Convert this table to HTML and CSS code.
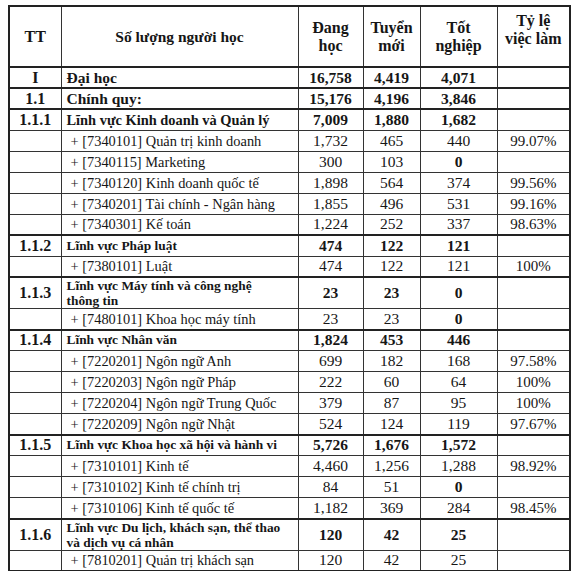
FILE: index.html
```html
<!DOCTYPE html>
<html lang="vi">
<head>
<meta charset="utf-8">
<link rel="stylesheet" href="styles.css">
</head>
<body>
<table class="stats">
  <colgroup>
    <col class="c-tt"><col class="c-name"><col class="c-n1"><col class="c-n2"><col class="c-n3"><col class="c-rate">
  </colgroup>
  <thead>
    <tr class="head">
      <th>TT</th>
      <th class="title">Số lượng người học</th>
      <th>Đang<br>học</th>
      <th>Tuyển<br>mới</th>
      <th>Tốt<br>nghiệp</th>
      <th class="top">Tỷ lệ<br>việc làm</th>
    </tr>
  </thead>
  <tbody>
    <tr class="b"><td class="tt">I</td><td class="name big">Đại học</td><td>16,758</td><td>4,419</td><td>4,071</td><td></td></tr>
    <tr class="b"><td class="tt">1.1</td><td class="name big">Chính quy:</td><td>15,176</td><td>4,196</td><td>3,846</td><td></td></tr>
    <tr class="b"><td class="tt">1.1.1</td><td class="name mid">Lĩnh vực Kinh doanh và Quản lý</td><td>7,009</td><td>1,880</td><td>1,682</td><td></td></tr>
    <tr><td></td><td class="name sub">+ [7340101] Quản trị kinh doanh</td><td>1,732</td><td>465</td><td>440</td><td class="rate">99.07%</td></tr>
    <tr><td></td><td class="name sub">+ [7340115] Marketing</td><td>300</td><td>103</td><td class="bold">0</td><td></td></tr>
    <tr><td></td><td class="name sub">+ [7340120] Kinh doanh quốc tế</td><td>1,898</td><td>564</td><td>374</td><td class="rate">99.56%</td></tr>
    <tr><td></td><td class="name sub">+ [7340201] Tài chính - Ngân hàng</td><td>1,855</td><td>496</td><td>531</td><td class="rate">99.16%</td></tr>
    <tr><td></td><td class="name sub">+ [7340301] Kế toán</td><td>1,224</td><td>252</td><td>337</td><td class="rate">98.63%</td></tr>
    <tr class="b"><td class="tt">1.1.2</td><td class="name">Lĩnh vực Pháp luật</td><td>474</td><td>122</td><td>121</td><td></td></tr>
    <tr><td></td><td class="name sub">+ [7380101] Luật</td><td>474</td><td>122</td><td>121</td><td class="rate">100%</td></tr>
    <tr class="b two"><td class="tt">1.1.3</td><td class="name">Lĩnh vực Máy tính và công nghệ<br>thông tin</td><td>23</td><td>23</td><td>0</td><td></td></tr>
    <tr><td></td><td class="name sub">+ [7480101] Khoa học máy tính</td><td>23</td><td>23</td><td class="bold">0</td><td></td></tr>
    <tr class="b"><td class="tt">1.1.4</td><td class="name">Lĩnh vực Nhân văn</td><td>1,824</td><td>453</td><td>446</td><td></td></tr>
    <tr><td></td><td class="name sub">+ [7220201] Ngôn ngữ Anh</td><td>699</td><td>182</td><td>168</td><td class="rate">97.58%</td></tr>
    <tr><td></td><td class="name sub">+ [7220203] Ngôn ngữ Pháp</td><td>222</td><td>60</td><td>64</td><td class="rate">100%</td></tr>
    <tr><td></td><td class="name sub">+ [7220204] Ngôn ngữ Trung Quốc</td><td>379</td><td>87</td><td>95</td><td class="rate">100%</td></tr>
    <tr><td></td><td class="name sub">+ [7220209] Ngôn ngữ Nhật</td><td>524</td><td>124</td><td>119</td><td class="rate">97.67%</td></tr>
    <tr class="b"><td class="tt">1.1.5</td><td class="name">Lĩnh vực Khoa học xã hội và hành vi</td><td>5,726</td><td>1,676</td><td>1,572</td><td></td></tr>
    <tr><td></td><td class="name sub">+ [7310101] Kinh tế</td><td>4,460</td><td>1,256</td><td>1,288</td><td class="rate">98.92%</td></tr>
    <tr><td></td><td class="name sub">+ [7310102] Kinh tế chính trị</td><td>84</td><td>51</td><td class="bold">0</td><td></td></tr>
    <tr><td></td><td class="name sub">+ [7310106] Kinh tế quốc tế</td><td>1,182</td><td>369</td><td>284</td><td class="rate">98.45%</td></tr>
    <tr class="b two"><td class="tt">1.1.6</td><td class="name">Lĩnh vực Du lịch, khách sạn, thể thao<br>và dịch vụ cá nhân</td><td>120</td><td>42</td><td>25</td><td></td></tr>
    <tr><td></td><td class="name sub">+ [7810201] Quản trị khách sạn</td><td>120</td><td>42</td><td>25</td><td></td></tr>
  </tbody>
</table>
</body>
</html>
```
FILE: styles.css
```css
html, body {
  margin: 0;
  padding: 0;
  background: #ffffff;
}
body {
  padding: 5px 0 0 8px;
  font-family: "Liberation Serif", "Times New Roman", serif;
  color: #161616;
}
.stats {
  border-collapse: collapse;
  table-layout: fixed;
  width: 561px;
  border: 2px solid #222;
  font-size: 15.5px;
  line-height: 18px;
}
.c-tt { width: 52px; }
.c-name { width: 237px; }
.c-n1 { width: 65px; }
.c-n2 { width: 57px; }
.c-n3 { width: 77px; }
.c-rate { width: 73px; }
.stats th, .stats td {
  border: 1px solid #333;
  padding: 0;
  text-align: center;
  vertical-align: middle;
  white-space: nowrap;
}
.stats th {
  font-weight: bold;
  font-size: 16px;
}
.stats th.title { font-size: 15.5px; }
.stats th.top {
  vertical-align: top;
  padding-top: 5px;
}
.head { height: 61px; }
.head th { border-bottom: 2px solid #222; }
tbody tr { height: 21px; }
tbody tr.two { height: 31px; }
tbody tr.two td.name { line-height: 15px; }
tr.b td { font-weight: bold; }
tr.b { border-top: 2px solid #222; }
td.tt { font-weight: bold; font-size: 16px; }
td.name {
  text-align: left;
  padding-left: 5px;
  font-size: 13.4px;
}
td.name.big { font-size: 15.5px; }
td.name.mid { font-size: 14.4px; }
td.name.sub { padding-left: 9px; font-weight: normal; font-size: 14.4px; }
td.rate { font-size: 15px; }
td.bold { font-weight: bold; }
```
